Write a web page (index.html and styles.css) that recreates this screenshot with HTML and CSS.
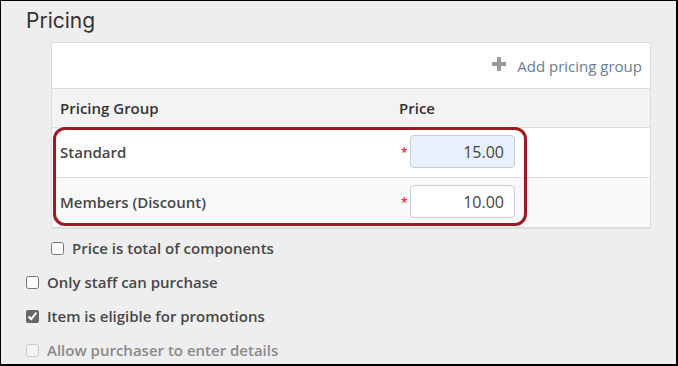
FILE: index.html
```html
<!DOCTYPE html>
<html>
<head>
  <title>Pricing</title>
  <meta charset="UTF-8">
  <link rel="stylesheet" href="styles.css">
</head>
<body>
  <div class="section">
    <h2 class="section-title">Pricing</h2>

    <div class="pricing-panel">
      <div class="panel-toolbar">
        <a class="add-link" href="#">
          <svg class="plus-icon" width="14" height="14" viewBox="0 0 14 14">
            <rect x="5" y="0" width="4" height="14" fill="#999"/>
            <rect x="0" y="5" width="14" height="4" fill="#999"/>
          </svg>
          Add pricing group
        </a>
      </div>

      <div class="price-row header-row">
        <div class="col-name">Pricing Group</div>
        <div class="col-price">Price</div>
      </div>

      <div class="price-row">
        <div class="col-name">Standard</div>
        <div class="col-price">
          <span class="required">*</span>
          <input class="price-input autofilled" type="text" value="15.00">
        </div>
      </div>

      <div class="price-row alt">
        <div class="col-name">Members (Discount)</div>
        <div class="col-price">
          <span class="required">*</span>
          <input class="price-input" type="text" value="10.00">
        </div>
      </div>

      <!-- highlight drawn over the two price rows -->
      <div class="highlight"></div>
    </div>

    <div class="check-row indented">
      <input type="checkbox" id="totalComponents">
      <label for="totalComponents">Price is total of components</label>
    </div>
    <div class="check-row">
      <input type="checkbox" id="staffOnly">
      <label for="staffOnly">Only staff can purchase</label>
    </div>
    <div class="check-row">
      <input type="checkbox" id="promotions" checked>
      <label for="promotions">Item is eligible for promotions</label>
    </div>
    <div class="check-row disabled">
      <input type="checkbox" id="details" disabled>
      <label for="details">Allow purchaser to enter details</label>
    </div>
  </div>
</body>
</html>
```

FILE: styles.css
```css
html, body {
  height: 100%;
}

body {
  margin: 0;
  box-sizing: border-box;
  background: #eeeeee;
  border-top: 1px solid #000;
  border-left: 1px solid #000;
  border-right: 2px solid #000;
  border-bottom: 2px solid #000;
  font-family: 'Open Sans', sans-serif;
  font-size: 15px;
  color: #474747;
  overflow: hidden;
}

.section {
  padding: 0 25px;
}

.section-title {
  margin: 0 0 7px 0;
  padding-top: 6px;
  font-family: 'Inter', sans-serif;
  font-size: 21px;
  font-weight: 400;
  line-height: 28px;
  color: #333;
}

.pricing-panel {
  position: relative;
  margin-left: 25px;
  background: #fff;
  border: 1px solid #dddddd;
}

.panel-toolbar {
  height: 45px;
  display: flex;
  align-items: center;
  justify-content: flex-end;
  padding-right: 8px;
  border-bottom: 1px solid #dddddd;
}

.add-link {
  display: flex;
  align-items: center;
  gap: 11px;
  color: #6b7c8f;
  font-size: 15px;
  text-decoration: none;
}

.plus-icon {
  margin-top: -3px;
}

.price-row {
  display: flex;
  align-items: center;
  height: 47px;
  padding-bottom: 2px;
  border-bottom: 1px solid #dddddd;
  font-weight: 600;
}

.price-row:last-of-type {
  border-bottom: none;
}

.price-row.alt {
  background: #f9f9f9;
}

.header-row {
  height: 37px;
  padding-bottom: 1px;
  background: #f3f3f3;
  color: #333;
}

.col-name {
  width: 331px;
  padding-left: 8px;
}

.col-price {
  display: flex;
  align-items: center;
  padding-left: 10px;
}

.header-row .col-price {
  padding-left: 8px;
}

.required {
  color: #e8202a;
  font-size: 12px;
  width: 9px;
  margin-top: 2px;
}

.price-input {
  width: 105px;
  height: 33px;
  box-sizing: border-box;
  padding: 0 10px;
  border: 1px solid #cccccc;
  border-radius: 4px;
  background: #fff;
  font-family: 'Open Sans', sans-serif;
  font-size: 16px;
  color: #444;
  text-align: right;
}

.price-input.autofilled {
  background: #e8f0fe;
}

.highlight {
  position: absolute;
  left: 1px;
  top: 84px;
  width: 474px;
  height: 99px;
  box-sizing: border-box;
  border: 3px solid #9b1b22;
  border-radius: 12px;
  pointer-events: none;
}

.check-row {
  display: flex;
  align-items: center;
  gap: 8px;
  height: 34px;
  font-weight: 600;
}

.check-row.indented {
  margin-top: 2px;
  padding-left: 25px;
}

.check-row input {
  margin: 0;
  width: 13px;
  height: 13px;
  accent-color: #666;
}

.check-row.disabled label {
  color: #8a8a8a;
}
```
